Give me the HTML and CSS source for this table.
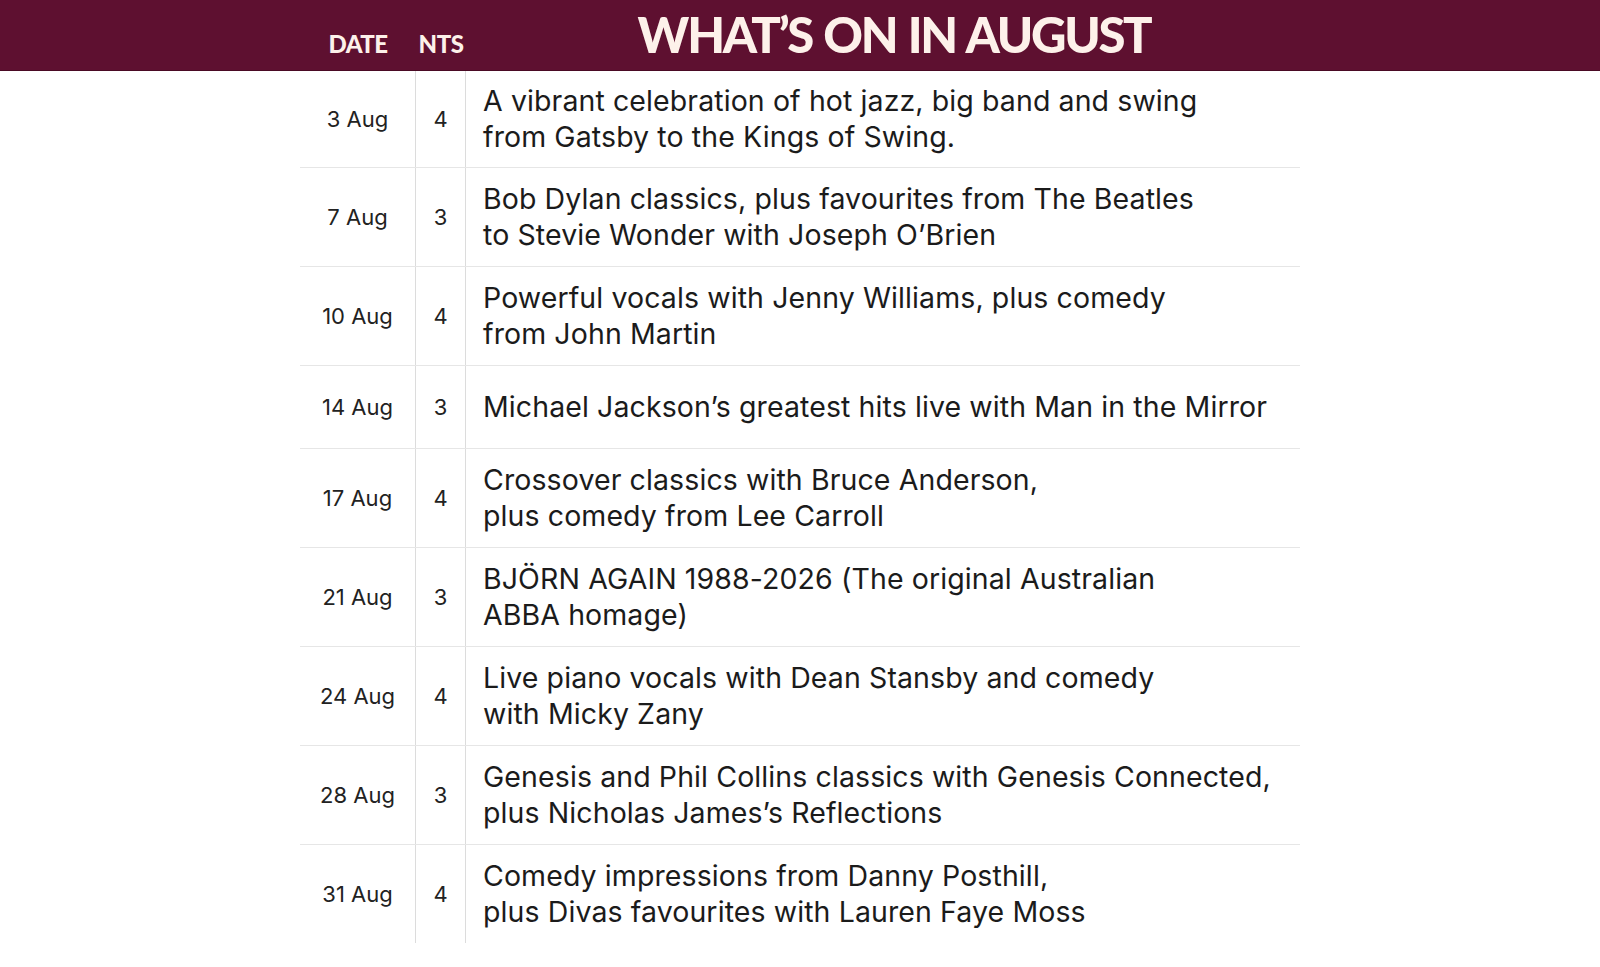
FILE: index.html
```html
<!DOCTYPE html>
<html lang="en">
<head>
<meta charset="utf-8">
<title>What's On in August</title>
<link rel="stylesheet" href="styles.css">
</head>
<body>
<header class="banner">
  <div class="banner-inner">
    <div class="col-label">DATE</div>
    <div class="col-label">NTS</div>
    <h1 class="title">WHAT’S ON IN AUGUST</h1>
  </div>
</header>
<main class="table">
  <div class="row"><div class="date">3 Aug</div><div class="nts">4</div><div class="desc">A vibrant celebration of hot jazz, big band and swing<br>from Gatsby to the Kings of Swing.</div></div>
  <div class="row"><div class="date">7 Aug</div><div class="nts">3</div><div class="desc">Bob Dylan classics, plus favourites from The Beatles<br>to Stevie Wonder with Joseph O’Brien</div></div>
  <div class="row"><div class="date">10 Aug</div><div class="nts">4</div><div class="desc">Powerful vocals with Jenny Williams, plus comedy<br>from John Martin</div></div>
  <div class="row"><div class="date">14 Aug</div><div class="nts">3</div><div class="desc">Michael Jackson’s greatest hits live with Man in the Mirror</div></div>
  <div class="row"><div class="date">17 Aug</div><div class="nts">4</div><div class="desc">Crossover classics with Bruce Anderson,<br>plus comedy from Lee Carroll</div></div>
  <div class="row"><div class="date">21 Aug</div><div class="nts">3</div><div class="desc">BJÖRN AGAIN 1988-2026 (The original Australian<br>ABBA homage)</div></div>
  <div class="row"><div class="date">24 Aug</div><div class="nts">4</div><div class="desc">Live piano vocals with Dean Stansby and comedy<br>with Micky Zany</div></div>
  <div class="row"><div class="date">28 Aug</div><div class="nts">3</div><div class="desc">Genesis and Phil Collins classics with Genesis Connected,<br>plus Nicholas James’s Reflections</div></div>
  <div class="row"><div class="date">31 Aug</div><div class="nts">4</div><div class="desc">Comedy impressions from Danny Posthill,<br>plus Divas favourites with Lauren Faye Moss</div></div>
</main>
</body>
</html>
```
FILE: styles.css
```css
* { box-sizing: border-box; }
html, body { margin: 0; padding: 0; background: #ffffff; }
body { font-family: "Inter", "Lato", sans-serif; color: #1b1b1b; }

.banner {
  background: #5e1030;
  height: 71px;
  border-bottom: 1px solid #4a0a24;
}
.banner-inner {
  width: 1000px;
  height: 100%;
  margin: 0 auto;
  display: grid;
  grid-template-columns: 116px 50px 1fr;
  align-items: end;
}
.col-label {
  font-family: "Lato", sans-serif;
  color: #fdf1ea;
  font-weight: 900;
  font-size: 24px;
  text-align: center;
  padding-bottom: 12px;
  letter-spacing: -0.5px;
}
.title {
  font-family: "Lato", sans-serif;
  margin: 0;
  color: #fdf1ea;
  font-weight: 900;
  font-size: 49px;
  line-height: 1;
  text-align: center;
  padding-left: 22px;
  padding-bottom: 11px;
  letter-spacing: -2.3px;
  word-spacing: 2px;
}

.table {
  width: 1000px;
  margin: 0 auto;
}
.row {
  display: grid;
  grid-template-columns: 116px 50px 1fr;
  border-bottom: 1px solid #e6e6e6;
  min-height: 83px;
}
.row:last-child { border-bottom: none; }
.date, .nts {
  display: flex;
  align-items: center;
  justify-content: center;
  font-size: 22px;
  color: #222;
  border-right: 1px solid #dcdcdc;
}
.desc {
  display: flex;
  flex-direction: column;
  justify-content: center;
  padding: 13.5px 0 13.5px 17px;
  font-size: 28.5px;
  line-height: 35.5px;
  white-space: nowrap;
  letter-spacing: 0.1px;
}
.row:first-child .desc {
  padding-top: 12px;
  padding-bottom: 12.5px;
}
```
